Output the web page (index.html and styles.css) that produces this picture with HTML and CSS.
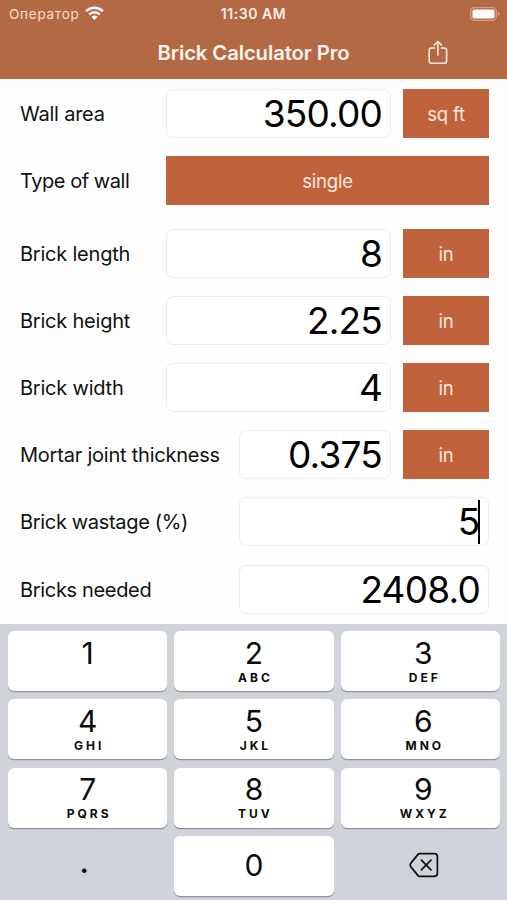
FILE: index.html
```html
<!DOCTYPE html>
<html lang="en">
<head>
<meta charset="utf-8">
<title>Brick Calculator Pro</title>
<link rel="stylesheet" href="styles.css">
</head>
<body>
<header class="header">
  <div class="status">
    <div class="carrier"><span>Оператор</span>
      <svg class="wifi" width="19" height="15" viewBox="0 0 19 15"><g fill="none" stroke="#fff" stroke-width="2.5"><path d="M1.1 5.2a12 12 0 0 1 16.8 0"/><path d="M4.2 8.4a7.6 7.6 0 0 1 10.6 0"/></g><path d="M9.5 14 6.5 10.9a4.3 4.3 0 0 1 6 0z" fill="#fff"/></svg>
    </div>
    <div class="time">11:30 AM</div>
    <svg class="battery" width="30" height="14" viewBox="0 0 30 14"><rect x=".7" y=".7" width="25.6" height="12.6" rx="3.6" fill="none" stroke="#d49f86" stroke-width="1.2"/><rect x="2.5" y="2.5" width="22" height="9" rx="1.8" fill="#fff"/><path d="M27.8 4.8q1.7.7 1.7 2.2t-1.7 2.2z" fill="#d49f86"/></svg>
  </div>
  <div class="navbar">
    <h1 class="title">Brick Calculator Pro</h1>
    <svg class="share" width="20" height="25" viewBox="0 0 20 25"><g fill="none" stroke="#ffe9df" stroke-width="1.6" stroke-linecap="round" stroke-linejoin="round"><path d="M6.4 8H3.4Q1.2 8 1.2 10.2V21Q1.2 23.2 3.4 23.2H16.4Q18.6 23.2 18.6 21V10.2Q18.6 8 16.4 8H13.4"/><path d="M9.9 15V1.7M6.3 5.1 9.9 1.5l3.6 3.6"/></g></svg>
  </div>
</header>
<main class="form">
  <div class="row"><label class="label">Wall area</label><div class="field">350.00</div><div class="unit">sq ft</div></div>
  <div class="row"><label class="label type">Type of wall</label><div class="unit full">single</div></div>
  <div class="row spaced"><label class="label">Brick length</label><div class="field">8</div><div class="unit">in</div></div>
  <div class="row"><label class="label">Brick height</label><div class="field">2.25</div><div class="unit">in</div></div>
  <div class="row"><label class="label">Brick width</label><div class="field">4</div><div class="unit">in</div></div>
  <div class="row long"><label class="label">Mortar joint thickness</label><div class="field">0.375</div><div class="unit">in</div></div>
  <div class="row long"><label class="label tight">Brick wastage (%)</label><div class="field">5<span class="caret"></span></div></div>
  <div class="row long"><label class="label tight">Bricks needed</label><div class="field">2408.0</div></div>
</main>
<section class="keyboard">
  <div class="key"><b>1</b></div>
  <div class="key"><b>2</b><i>ABC</i></div>
  <div class="key right"><b>3</b><i>DEF</i></div>
  <div class="key"><b>4</b><i>GHI</i></div>
  <div class="key"><b>5</b><i>JKL</i></div>
  <div class="key right"><b>6</b><i>MNO</i></div>
  <div class="key"><b>7</b><i>PQRS</i></div>
  <div class="key"><b>8</b><i>TUV</i></div>
  <div class="key right"><b>9</b><i>WXYZ</i></div>
  <div class="key plain dot"><b>.</b></div>
  <div class="key zero"><b>0</b></div>
  <div class="key plain"><svg class="erase" width="30" height="26" viewBox="0 0 30 26"><g fill="none" stroke="#111" stroke-width="1.7" stroke-linecap="round" stroke-linejoin="round"><path d="M10.6 1.7H25.4Q28.4 1.7 28.4 4.7V21.3Q28.4 24.3 25.4 24.3H10.6Q9.7 24.3 9 23.6L1.7 14.6Q.6 13 1.7 11.4L9 2.4Q9.7 1.7 10.6 1.7Z"/><path d="M12.4 8.2 22 17.8M22 8.2 12.4 17.8"/></g></svg></div>
</section>
</body>
</html>
```
FILE: styles.css
```css
* { box-sizing: border-box; }
body {
  margin: 0;
  width: 507px;
  height: 900px;
  overflow: hidden;
  display: flex;
  flex-direction: column;
  background: #fefefe;
  color: #111;
  font-family: Inter, "Liberation Sans", sans-serif;
}
svg { display: block; }
.header { height: 79px; flex: none; background: #b46945; color: #fff; }
.status {
  height: 27px;
  display: grid;
  grid-template-columns: 1fr auto 1fr;
  align-items: center;
  padding: 0 7px 0 9px;
  font-size: 13.5px;
}
.carrier { display: flex; align-items: center; gap: 5px; color: #f8dccf; }
.carrier span { letter-spacing: .75px; }
.wifi { margin-top: -1px; }
.time { font-weight: 600; color: #ffeee6; font-size: 14px; letter-spacing: .55px; margin-left: -2px; }
.battery { justify-self: end; }
.navbar {
  height: 52px;
  display: grid;
  grid-template-columns: 1fr auto 1fr;
  align-items: center;
}
.title {
  grid-column: 2;
  margin: 0 0 1px;
  font-size: 20.3px;
  font-weight: 600;
  letter-spacing: -.1px;
  color: #fff5ef;
}
.share { margin: 0 0 1px 78px; }
.form {
  height: 545px;
  flex: none;
  padding: 9.5px 18px 0 20px;
  display: flex;
  flex-direction: column;
  gap: 18.1px;
}
.row { height: 49px; flex: none; display: grid; grid-template-columns: 146px 1fr auto; align-items: stretch; }
.row.spaced { margin-top: 6.4px; }
.row.long { grid-template-columns: 219px 1fr auto; }
.label { align-self: center; padding-top: 1px; font-size: 20px; letter-spacing: -.22px; white-space: nowrap; }
.label.type { letter-spacing: -.45px; }
.label.tight { letter-spacing: -.33px; }
.field {
  display: flex;
  align-items: center;
  justify-content: flex-end;
  padding-right: 8px;
  border: 1px solid #ededed;
  border-radius: 7px;
  background: #fff;
  color: #000;
  font-size: 37px;
  letter-spacing: -.8px;
}
.caret { width: 2.5px; height: 44px; background: #000; margin-left: -2px; }
.unit {
  width: 86px;
  margin-left: 12px;
  padding-top: 1px;
  display: flex;
  align-items: center;
  justify-content: center;
  background: #c0633c;
  color: #ffe8dc;
  font-size: 18.5px;
  letter-spacing: -.2px;
}
.unit.full { grid-column: 2 / 4; width: auto; margin-left: 0; }
.keyboard {
  flex: 1;
  display: grid;
  grid-template-columns: repeat(3, 159.3px);
  grid-auto-rows: 60px;
  gap: 8.4px 7px;
  padding: 7px 8px 0;
  background: #d0d3da;
}
.key {
  display: flex;
  flex-direction: column;
  align-items: center;
  padding-top: 3.5px;
  border-radius: 6px;
  background: #fff;
  box-shadow: 0 1.3px 0 #909297;
  color: #0b0b0b;
}
.key b { font-size: 30px; line-height: 36px; font-weight: 400; }
.key i {
  font-style: normal;
  font-size: 12px;
  line-height: 14px;
  font-weight: 700;
  letter-spacing: 3px;
  margin-right: -3px;
}
.right { padding-left: 6px; }
.plain { background: none; box-shadow: none; padding-top: 0; justify-content: center; }
.zero { padding-top: 11px; }
.dot { padding: 0 7px 10px 0; }
.dot b { font-size: 34px; }
.erase { margin: -2px 0 0 8px; }
```
